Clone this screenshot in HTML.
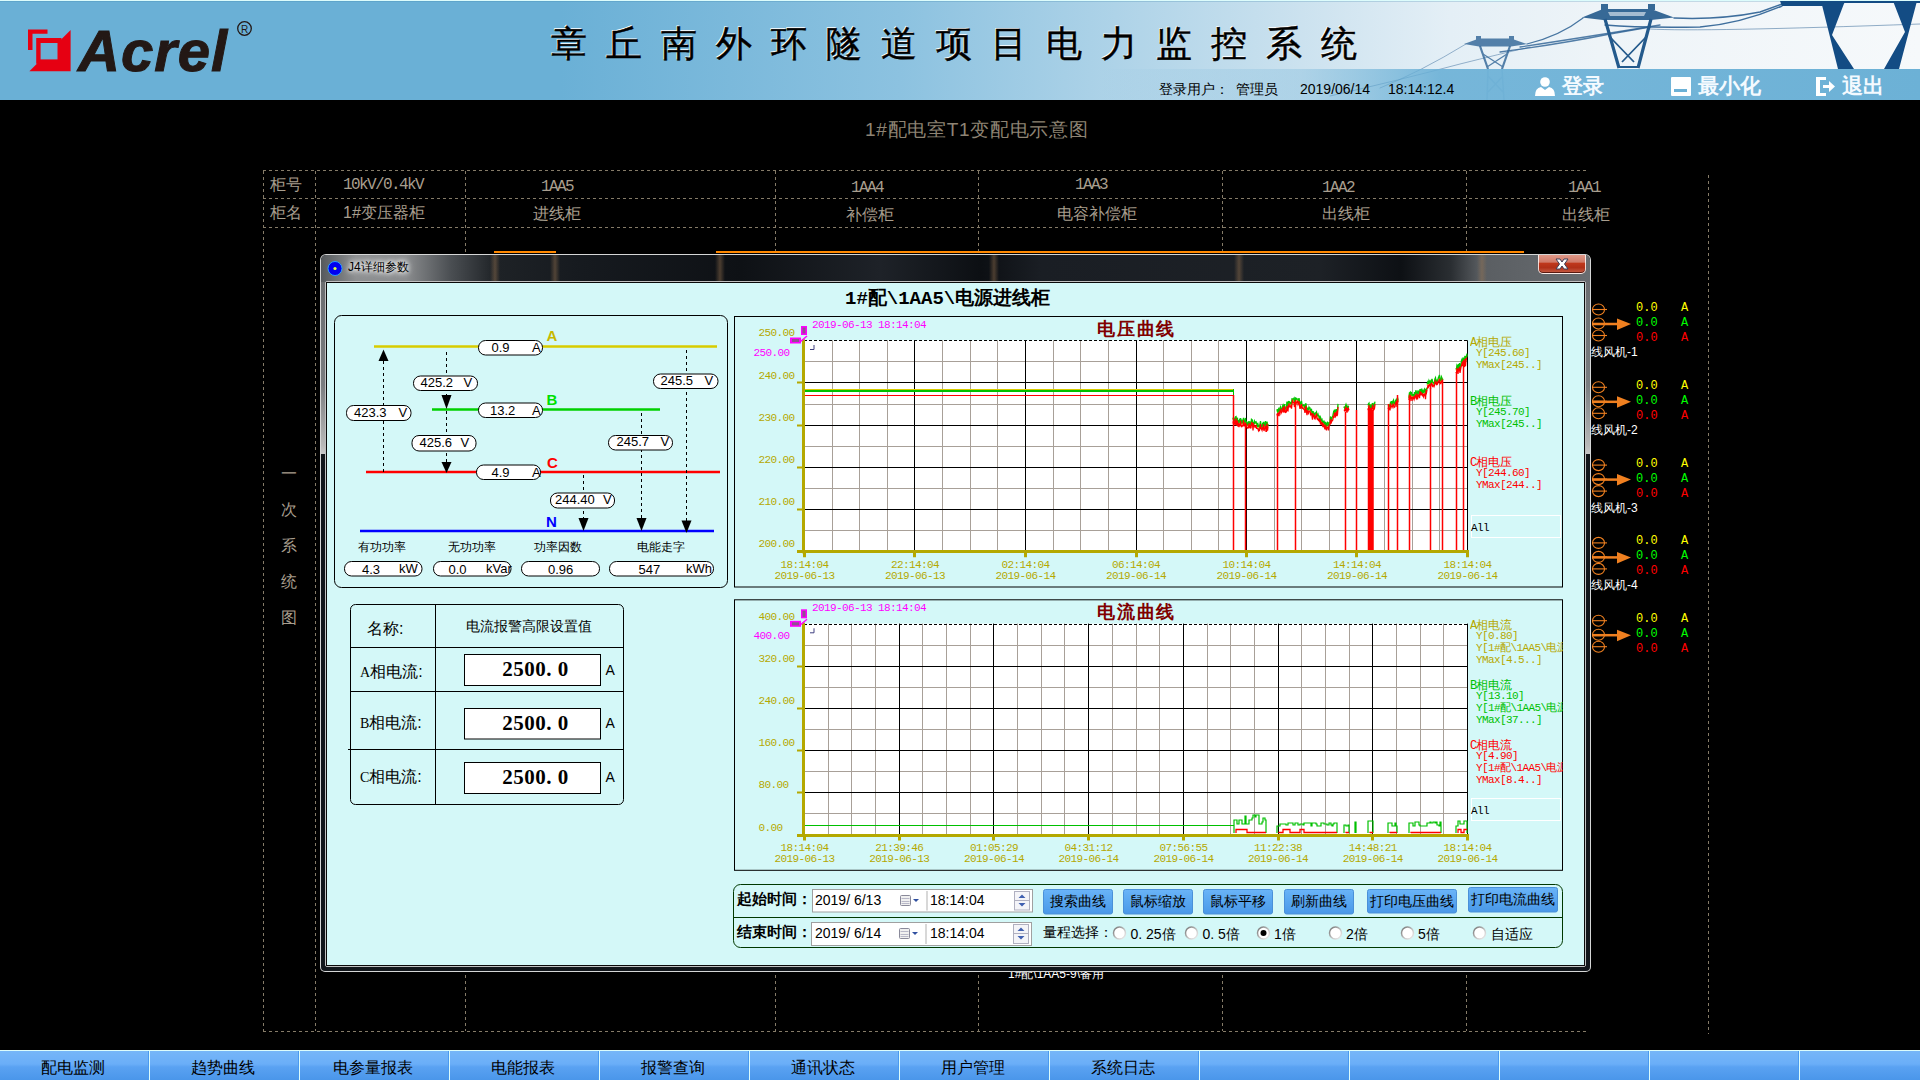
<!DOCTYPE html><html><head><meta charset="utf-8"><style>
*{margin:0;padding:0;box-sizing:border-box}
html,body{width:1920px;height:1080px;overflow:hidden;background:#000;font-family:"Liberation Sans",sans-serif}
.a{position:absolute;white-space:nowrap;line-height:1}
.m{font-family:"Liberation Mono",monospace}
.sf{font-family:"Liberation Serif",serif}
</style></head><body>

<div class="a" style="left:0;top:0;width:1920px;height:100px;background:linear-gradient(90deg,#6ab0d6 0px,#6ab0d6 560px,#8cc2e0 900px,#c8e0ee 1280px,#e4eff6 1450px,#eef4f8 1600px,#f6f9fb 1920px)"></div>
<div class="a" style="left:0;top:0;width:1920px;height:1px;background:#dcfcfc"></div>
<div class="a" style="left:0;top:1px;width:1920px;height:1px;background:rgba(60,130,170,0.25)"></div>

<svg class="a" style="left:0;top:0" width="260" height="80" viewBox="0 0 260 80">
<path fill="#e60012" d="M28 29.4 H47.5 V33.8 H32.5 V50 H28 Z"/>
<path fill="#e60012" d="M70.6 30 V71.2 H29.4 Z"/>
<path fill="#e60012" d="M36.2 38 H61.5 V63.8 H36.2 Z"/><rect x="40.6" y="43" width="16.9" height="16.4" fill="#6ab0d6"/>
</svg>
<div class="a" style="left:78px;top:22px;font-size:58px;font-weight:bold;font-style:italic;color:#231815;letter-spacing:1px;-webkit-text-stroke:1px #231815">Acrel</div>
<svg class="a" style="left:236px;top:20px" width="17" height="17" viewBox="0 0 17 17"><circle cx="8.5" cy="8.5" r="6.8" fill="none" stroke="#231815" stroke-width="1.3"/><text x="8.5" y="12.5" font-size="10" text-anchor="middle" fill="#231815" font-family="Liberation Sans">R</text></svg>

<div class="a" style="left:551px;top:26px;font-size:36px;letter-spacing:19px;color:#000;-webkit-text-stroke:0.5px #000;text-shadow:-1px -1px 0 #fff">章丘南外环隧道项目电力监控系统</div>
<svg class="a" style="left:1300px;top:0" width="620" height="100" viewBox="1300 0 620 100">
<g fill="none" stroke="#2a5f92" stroke-linecap="round">
<path d="M1380 88 Q1420 72 1466 44" stroke-width="1" opacity=".45"/>
<path d="M1330 96 Q1400 80 1460 64 Q1500 54 1530 47" stroke-width="1" opacity=".45"/>
<path d="M1527 44 Q1560 36 1583 18" stroke-width="1.2" opacity=".85"/>
<path d="M1500 52 Q1560 44 1610 34 L1650 27" stroke-width="1.3" opacity=".8"/>
<path d="M1520 47 Q1580 38 1660 25" stroke-width="1.3" opacity=".8"/>
<path d="M1605 25 Q1640 28 1700 27 Q1740 24 1782 6" stroke-width="1.4" opacity=".9"/>
<path d="M1674 18 Q1720 20 1760 12 L1782 4" stroke-width="1.5" opacity=".9"/>
<path d="M1650 29 Q1700 32 1920 24" stroke-width="1" opacity=".5"/>
</g>
<g fill="#2f6496" opacity=".8">
<path d="M1464 44 L1479 38.5 H1511 L1527 44 L1511 46.5 H1479 Z"/>
<path d="M1476 36 h5 v4 h-5 Z M1509 36 h5 v4 h-5 Z"/>
</g>
<g stroke="#2f6496" fill="none" opacity=".8">
<path d="M1480 46 L1488 69 M1510 46 L1502 69" stroke-width="2.2"/>
<path d="M1483 54 L1503 67 M1507 54 L1487 67" stroke-width="1.3"/>
</g>
<g stroke="#6a98c0" fill="none" opacity=".55">
<path d="M1488 69 L1487 100 M1502 69 L1504 100 M1488 76 L1503 92 M1503 76 L1488 92" stroke-width="1.5"/>
</g>
<g fill="#245a8c" opacity=".9">
<path d="M1582 17.5 L1603 9 H1651 L1674 17.5 L1651 20 H1603 Z"/>
<path d="M1601 4 h7 v6 h-7 Z M1648 4 h7 v6 h-7 Z"/>
</g>
<path d="M1608 12 H1646 L1644 16 H1610 Z" fill="#eef4f9" opacity=".6"/>
<g stroke="#245a8c" fill="none">
<path d="M1605 19 L1619 68 M1651 19 L1638 68" stroke-width="3.2"/>
<path d="M1609 36 L1634 62 M1647 36 L1622 62 M1618 67 H1639" stroke-width="1.8"/>
</g>
<g fill="#134c84">
<path d="M1780 1 H1920 V3 L1845 3 L1822 6 H1782 Z"/>
<path d="M1821 1 H1845 L1832 35 L1854 69 H1838 Z"/>
<path d="M1893 1 H1917 L1899 69 H1884 L1905 32 Z"/>
</g>
</svg>

<div class="a" style="left:1100px;top:69px;width:820px;height:31px;background:linear-gradient(90deg,rgba(106,176,214,0) 0px,rgba(106,176,214,0.3) 200px,rgba(106,176,214,0.9) 340px,#6cb1d6 820px)"></div>
<div class="a" style="left:1159px;top:82px;font-size:14px;color:#000">登录用户：</div>
<div class="a" style="left:1236px;top:82px;font-size:14px;color:#000">管理员</div>
<div class="a" style="left:1300px;top:82px;font-size:14px;color:#000">2019/06/14</div>
<div class="a" style="left:1388px;top:82px;font-size:14px;color:#000">18:14:12.4</div>
<svg class="a" style="left:1530px;top:74px" width="390" height="26" viewBox="1530 74 390 26">
<g fill="#fff">
<circle cx="1545" cy="82" r="4.8"/>
<path d="M1535 96 Q1535 88 1541 87 L1545 90 L1549 87 Q1555 88 1555 96 Z"/>
<rect x="1671" y="77" width="20" height="19" rx="1"/>
<path d="M1816 77 H1826 V80 H1820 V93 H1826 V96 H1816 Z"/>
<path d="M1823 85 H1829 V81 L1835 86.5 L1829 92 V88 H1823 Z"/>
</g>
<rect x="1674" y="89" width="13" height="3" fill="#6cb1d6"/>
</svg>
<div class="a" style="left:1562px;top:75px;font-size:21px;font-weight:bold;color:#f4faff">登录</div>
<div class="a" style="left:1698px;top:75px;font-size:21px;font-weight:bold;color:#f4faff">最小化</div>
<div class="a" style="left:1842px;top:75px;font-size:21px;font-weight:bold;color:#f4faff">退出</div>

<div class="a" style="left:865px;top:119.5px;font-size:19px;letter-spacing:0.7px;color:#8e8474">1#配电室T1变配电示意图</div>
<svg class="a" style="left:0;top:0" width="1920" height="1080"><g stroke="#857b68" stroke-width="1" stroke-dasharray="3 3" fill="none"><path d="M263 170.5 H1588"/><path d="M263 198.5 H1588"/><path d="M263 227.5 H1588"/><path d="M263 1031.5 H1588"/><path d="M263.5 171 V1031"/><path d="M315.5 171 V1031"/><path d="M465.5 171 V1031"/><path d="M775.5 171 V1031"/><path d="M978.5 171 V1031"/><path d="M1222.5 171 V1031"/><path d="M1466.5 171 V1031"/><path d="M1708.5 175 V1034"/></g><rect x="494" y="251" width="62" height="2" fill="#ff8800"/><rect x="716" y="251" width="808" height="2" fill="#ff8800"/></svg>
<div class="a" style="left:270px;top:177px;font-size:16px;color:#a89e8e">柜号</div>
<div class="a" style="left:270px;top:205px;font-size:16px;color:#a89e8e">柜名</div>
<div class="a m" style="left:343px;top:177px;font-size:16px;letter-spacing:-1.6px;color:#a89e8e">10kV/0.4kV</div>
<div class="a m" style="left:541px;top:179px;font-size:16px;letter-spacing:-1.6px;color:#a89e8e">1AA5</div>
<div class="a m" style="left:851px;top:180px;font-size:16px;letter-spacing:-1.6px;color:#a89e8e">1AA4</div>
<div class="a m" style="left:1075px;top:177px;font-size:16px;letter-spacing:-1.6px;color:#a89e8e">1AA3</div>
<div class="a m" style="left:1322px;top:180px;font-size:16px;letter-spacing:-1.6px;color:#a89e8e">1AA2</div>
<div class="a m" style="left:1568px;top:180px;font-size:16px;letter-spacing:-1.6px;color:#a89e8e">1AA1</div>
<div class="a" style="left:343px;top:205px;font-size:16px;color:#a89e8e">1#变压器柜</div>
<div class="a" style="left:533px;top:206px;font-size:16px;color:#a89e8e">进线柜</div>
<div class="a" style="left:846px;top:207px;font-size:16px;color:#a89e8e">补偿柜</div>
<div class="a" style="left:1057px;top:206px;font-size:16px;color:#a89e8e">电容补偿柜</div>
<div class="a" style="left:1322px;top:206px;font-size:16px;color:#a89e8e">出线柜</div>
<div class="a" style="left:1562px;top:207px;font-size:16px;color:#a89e8e">出线柜</div>
<div class="a" style="left:281px;top:466px;font-size:16px;color:#a89e8e">一</div>
<div class="a" style="left:281px;top:502px;font-size:16px;color:#a89e8e">次</div>
<div class="a" style="left:281px;top:538px;font-size:16px;color:#a89e8e">系</div>
<div class="a" style="left:281px;top:574px;font-size:16px;color:#a89e8e">统</div>
<div class="a" style="left:281px;top:610px;font-size:16px;color:#a89e8e">图</div>
<div class="a" style="left:1008px;top:968px;font-size:12px;color:#fff">1#配\1AA5-9\备用</div>
<svg class="a" style="left:1585px;top:290px" width="60" height="380" viewBox="1585 290 60 380"><g stroke="#f08020" fill="none" stroke-width="1.1"><ellipse cx="1598.5" cy="309.5" rx="6" ry="5.5"/><path d="M1592 309.5 H1607"/></g><g stroke="#f08020" fill="none" stroke-width="1.1"><ellipse cx="1598.5" cy="323.5" rx="6" ry="5.5"/><path d="M1592 323.5 H1607"/></g><g stroke="#f08020" fill="none" stroke-width="1.1"><ellipse cx="1598.5" cy="335.5" rx="6" ry="5.5"/><path d="M1592 335.5 H1607"/></g><path d="M1592 324.0 H1620" stroke="#f08020" stroke-width="2.5"/><path d="M1617 318.5 L1631 324.0 L1617 330.0 Z" fill="#f08020"/><g stroke="#f08020" fill="none" stroke-width="1.1"><ellipse cx="1598.5" cy="387.3" rx="6" ry="5.5"/><path d="M1592 387.3 H1607"/></g><g stroke="#f08020" fill="none" stroke-width="1.1"><ellipse cx="1598.5" cy="401.3" rx="6" ry="5.5"/><path d="M1592 401.3 H1607"/></g><g stroke="#f08020" fill="none" stroke-width="1.1"><ellipse cx="1598.5" cy="413.3" rx="6" ry="5.5"/><path d="M1592 413.3 H1607"/></g><path d="M1592 401.8 H1620" stroke="#f08020" stroke-width="2.5"/><path d="M1617 396.3 L1631 401.8 L1617 407.8 Z" fill="#f08020"/><g stroke="#f08020" fill="none" stroke-width="1.1"><ellipse cx="1598.5" cy="465.1" rx="6" ry="5.5"/><path d="M1592 465.1 H1607"/></g><g stroke="#f08020" fill="none" stroke-width="1.1"><ellipse cx="1598.5" cy="479.1" rx="6" ry="5.5"/><path d="M1592 479.1 H1607"/></g><g stroke="#f08020" fill="none" stroke-width="1.1"><ellipse cx="1598.5" cy="491.1" rx="6" ry="5.5"/><path d="M1592 491.1 H1607"/></g><path d="M1592 479.6 H1620" stroke="#f08020" stroke-width="2.5"/><path d="M1617 474.1 L1631 479.6 L1617 485.6 Z" fill="#f08020"/><g stroke="#f08020" fill="none" stroke-width="1.1"><ellipse cx="1598.5" cy="542.9" rx="6" ry="5.5"/><path d="M1592 542.9 H1607"/></g><g stroke="#f08020" fill="none" stroke-width="1.1"><ellipse cx="1598.5" cy="556.9" rx="6" ry="5.5"/><path d="M1592 556.9 H1607"/></g><g stroke="#f08020" fill="none" stroke-width="1.1"><ellipse cx="1598.5" cy="568.9" rx="6" ry="5.5"/><path d="M1592 568.9 H1607"/></g><path d="M1592 557.4 H1620" stroke="#f08020" stroke-width="2.5"/><path d="M1617 551.9 L1631 557.4 L1617 563.4 Z" fill="#f08020"/><g stroke="#f08020" fill="none" stroke-width="1.1"><ellipse cx="1598.5" cy="620.7" rx="6" ry="5.5"/><path d="M1592 620.7 H1607"/></g><g stroke="#f08020" fill="none" stroke-width="1.1"><ellipse cx="1598.5" cy="634.7" rx="6" ry="5.5"/><path d="M1592 634.7 H1607"/></g><g stroke="#f08020" fill="none" stroke-width="1.1"><ellipse cx="1598.5" cy="646.7" rx="6" ry="5.5"/><path d="M1592 646.7 H1607"/></g><path d="M1592 635.2 H1620" stroke="#f08020" stroke-width="2.5"/><path d="M1617 629.7 L1631 635.2 L1617 641.2 Z" fill="#f08020"/></svg>
<div class="a m" style="left:1636px;top:302px;font-size:12px;color:#ffff00">0.0</div>
<div class="a m" style="left:1681px;top:302px;font-size:12px;color:#ffff00">A</div>
<div class="a m" style="left:1636px;top:317px;font-size:12px;color:#00ff00">0.0</div>
<div class="a m" style="left:1681px;top:317px;font-size:12px;color:#00ff00">A</div>
<div class="a m" style="left:1636px;top:332px;font-size:12px;color:#ff0000">0.0</div>
<div class="a m" style="left:1681px;top:332px;font-size:12px;color:#ff0000">A</div>
<div class="a" style="left:1591px;top:346px;font-size:12px;color:#fff">线风机-1</div>
<div class="a m" style="left:1636px;top:380px;font-size:12px;color:#ffff00">0.0</div>
<div class="a m" style="left:1681px;top:380px;font-size:12px;color:#ffff00">A</div>
<div class="a m" style="left:1636px;top:395px;font-size:12px;color:#00ff00">0.0</div>
<div class="a m" style="left:1681px;top:395px;font-size:12px;color:#00ff00">A</div>
<div class="a m" style="left:1636px;top:410px;font-size:12px;color:#ff0000">0.0</div>
<div class="a m" style="left:1681px;top:410px;font-size:12px;color:#ff0000">A</div>
<div class="a" style="left:1591px;top:424px;font-size:12px;color:#fff">线风机-2</div>
<div class="a m" style="left:1636px;top:458px;font-size:12px;color:#ffff00">0.0</div>
<div class="a m" style="left:1681px;top:458px;font-size:12px;color:#ffff00">A</div>
<div class="a m" style="left:1636px;top:473px;font-size:12px;color:#00ff00">0.0</div>
<div class="a m" style="left:1681px;top:473px;font-size:12px;color:#00ff00">A</div>
<div class="a m" style="left:1636px;top:488px;font-size:12px;color:#ff0000">0.0</div>
<div class="a m" style="left:1681px;top:488px;font-size:12px;color:#ff0000">A</div>
<div class="a" style="left:1591px;top:502px;font-size:12px;color:#fff">线风机-3</div>
<div class="a m" style="left:1636px;top:535px;font-size:12px;color:#ffff00">0.0</div>
<div class="a m" style="left:1681px;top:535px;font-size:12px;color:#ffff00">A</div>
<div class="a m" style="left:1636px;top:550px;font-size:12px;color:#00ff00">0.0</div>
<div class="a m" style="left:1681px;top:550px;font-size:12px;color:#00ff00">A</div>
<div class="a m" style="left:1636px;top:565px;font-size:12px;color:#ff0000">0.0</div>
<div class="a m" style="left:1681px;top:565px;font-size:12px;color:#ff0000">A</div>
<div class="a" style="left:1591px;top:579px;font-size:12px;color:#fff">线风机-4</div>
<div class="a m" style="left:1636px;top:613px;font-size:12px;color:#ffff00">0.0</div>
<div class="a m" style="left:1681px;top:613px;font-size:12px;color:#ffff00">A</div>
<div class="a m" style="left:1636px;top:628px;font-size:12px;color:#00ff00">0.0</div>
<div class="a m" style="left:1681px;top:628px;font-size:12px;color:#00ff00">A</div>
<div class="a m" style="left:1636px;top:643px;font-size:12px;color:#ff0000">0.0</div>
<div class="a m" style="left:1681px;top:643px;font-size:12px;color:#ff0000">A</div>
<div class="a" style="left:0;top:1050px;width:1920px;height:30px;background:#dcfcfc"></div>
<div class="a" style="left:0px;top:1051px;width:149px;height:29px;background:linear-gradient(#76b6f8,#6aaef8 45%,#5aa2f2 55%,#4a96ea);border-right:1px solid #4b9aee"></div>
<div class="a" style="left:-2px;top:1060px;width:149px;text-align:center;font-size:16px;color:#000">配电监测</div>
<div class="a" style="left:150px;top:1051px;width:149px;height:29px;background:linear-gradient(#76b6f8,#6aaef8 45%,#5aa2f2 55%,#4a96ea);border-right:1px solid #4b9aee"></div>
<div class="a" style="left:148px;top:1060px;width:149px;text-align:center;font-size:16px;color:#000">趋势曲线</div>
<div class="a" style="left:300px;top:1051px;width:149px;height:29px;background:linear-gradient(#76b6f8,#6aaef8 45%,#5aa2f2 55%,#4a96ea);border-right:1px solid #4b9aee"></div>
<div class="a" style="left:298px;top:1060px;width:149px;text-align:center;font-size:16px;color:#000">电参量报表</div>
<div class="a" style="left:450px;top:1051px;width:149px;height:29px;background:linear-gradient(#76b6f8,#6aaef8 45%,#5aa2f2 55%,#4a96ea);border-right:1px solid #4b9aee"></div>
<div class="a" style="left:448px;top:1060px;width:149px;text-align:center;font-size:16px;color:#000">电能报表</div>
<div class="a" style="left:600px;top:1051px;width:149px;height:29px;background:linear-gradient(#76b6f8,#6aaef8 45%,#5aa2f2 55%,#4a96ea);border-right:1px solid #4b9aee"></div>
<div class="a" style="left:598px;top:1060px;width:149px;text-align:center;font-size:16px;color:#000">报警查询</div>
<div class="a" style="left:750px;top:1051px;width:149px;height:29px;background:linear-gradient(#76b6f8,#6aaef8 45%,#5aa2f2 55%,#4a96ea);border-right:1px solid #4b9aee"></div>
<div class="a" style="left:748px;top:1060px;width:149px;text-align:center;font-size:16px;color:#000">通讯状态</div>
<div class="a" style="left:900px;top:1051px;width:149px;height:29px;background:linear-gradient(#76b6f8,#6aaef8 45%,#5aa2f2 55%,#4a96ea);border-right:1px solid #4b9aee"></div>
<div class="a" style="left:898px;top:1060px;width:149px;text-align:center;font-size:16px;color:#000">用户管理</div>
<div class="a" style="left:1050px;top:1051px;width:149px;height:29px;background:linear-gradient(#76b6f8,#6aaef8 45%,#5aa2f2 55%,#4a96ea);border-right:1px solid #4b9aee"></div>
<div class="a" style="left:1048px;top:1060px;width:149px;text-align:center;font-size:16px;color:#000">系统日志</div>
<div class="a" style="left:1200px;top:1051px;width:149px;height:29px;background:linear-gradient(#76b6f8,#6aaef8 45%,#5aa2f2 55%,#4a96ea);border-right:1px solid #4b9aee"></div>
<div class="a" style="left:1350px;top:1051px;width:149px;height:29px;background:linear-gradient(#76b6f8,#6aaef8 45%,#5aa2f2 55%,#4a96ea);border-right:1px solid #4b9aee"></div>
<div class="a" style="left:1500px;top:1051px;width:149px;height:29px;background:linear-gradient(#76b6f8,#6aaef8 45%,#5aa2f2 55%,#4a96ea);border-right:1px solid #4b9aee"></div>
<div class="a" style="left:1650px;top:1051px;width:149px;height:29px;background:linear-gradient(#76b6f8,#6aaef8 45%,#5aa2f2 55%,#4a96ea);border-right:1px solid #4b9aee"></div>
<div class="a" style="left:1800px;top:1051px;width:149px;height:29px;background:linear-gradient(#76b6f8,#6aaef8 45%,#5aa2f2 55%,#4a96ea);border-right:1px solid #4b9aee"></div>
<div class="a" style="left:320px;top:254px;width:1271px;height:718px;border:1px solid rgba(235,235,235,.9);border-radius:6px 6px 5px 5px;background:#12161b"></div>
<div class="a" style="left:321px;top:255px;width:1269px;height:27px;border-radius:5px 5px 0 0;background:linear-gradient(90deg,rgba(150,115,80,0) 169px,rgba(150,115,80,.45) 174px,rgba(150,115,80,0) 179px),linear-gradient(90deg,rgba(150,115,80,0) 229px,rgba(150,115,80,.45) 234px,rgba(150,115,80,0) 239px),linear-gradient(90deg,rgba(150,115,80,0) 394px,rgba(150,115,80,.45) 399px,rgba(150,115,80,0) 404px),linear-gradient(90deg,rgba(150,115,80,0) 668px,rgba(150,115,80,.45) 673px,rgba(150,115,80,0) 678px),linear-gradient(90deg,rgba(150,115,80,0) 913px,rgba(150,115,80,.45) 918px,rgba(150,115,80,0) 923px),linear-gradient(90deg,rgba(150,115,80,0) 1156px,rgba(150,115,80,.45) 1161px,rgba(150,115,80,0) 1166px),linear-gradient(90deg,#55595c 0px,#8e9092 35px,#8a8c8e 85px,#4a4e52 130px,#1e2226 175px,#161a1f 260px,#0e1115 420px,#1e2228 560px,#0c0f13 660px,#1a1e24 720px,#1d2126 1000px,#0d1014 1080px,#2a2e32 1130px,#5a5e62 1160px,#686c70 1269px)"></div>
<div class="a" style="left:321px;top:282px;width:5px;height:172px;background:linear-gradient(#6a6d70,#7a7d80 60%,#b8b8b8 95%,#c8c8c8)"></div>
<div class="a" style="left:1585px;top:282px;width:5px;height:172px;background:linear-gradient(#6a6d70,#7a7d80 60%,#b8b8b8 95%,#c8c8c8)"></div>
<div class="a" style="left:325px;top:281px;width:1261px;height:686px;border:1px solid #c0c0c0;border-radius:2px"></div>
<div class="a" style="left:326px;top:282px;width:1259px;height:684px;border:1px solid #0a0a0a;background:#d4f8f8"></div>

<div class="a" style="left:1538px;top:255px;width:48px;height:19px;border:1px solid rgba(255,255,255,.8);border-top:none;border-radius:0 0 5px 5px;background:linear-gradient(#e09888 0%,#d07a68 40%,#c0381c 45%,#b03018 70%,#c86048 100%);box-shadow:0 -1px 0 #5a1a10 inset"></div>
<svg class="a" style="left:1551px;top:257px" width="22" height="14" viewBox="0 0 22 14"><path d="M5 2 L9 2 L11 5 L13 2 L17 2 L13.5 7 L17 12 L13 12 L11 9 L9 12 L5 12 L8.5 7 Z" fill="#fff" stroke="#3a3e58" stroke-width="1"/></svg>

<svg class="a" style="left:326px;top:260px" width="18" height="18" viewBox="0 0 18 18"><circle cx="9" cy="8.5" r="7" fill="#0000f0" stroke="#2aa0ff" stroke-width="1"/><circle cx="9" cy="8.5" r="1.6" fill="#e0ff40"/></svg>
<div class="a" style="left:348px;top:261px;font-size:12px;color:#000;text-shadow:0 0 4px #fff,0 0 6px #fff,0 0 8px rgba(255,255,255,.8)">J4详细参数</div>

<div class="a m" style="left:845px;top:290px;font-size:19px;font-weight:bold;color:#000;letter-spacing:0px">1#配\1AA5\电源进线柜</div>
<svg class="a" style="left:0;top:0" width="1920" height="1080"><rect x="334.5" y="315.5" width="393" height="272" rx="7" fill="none" stroke="#000"/><path d="M374 346.5 H717" stroke="#d8cc00" stroke-width="2.5"/><path d="M432 409.5 H660" stroke="#00d000" stroke-width="2.5"/><path d="M366 472 H720" stroke="#ff0000" stroke-width="2.5"/><path d="M360 531 H714" stroke="#0000ff" stroke-width="2.5"/><path d="M383.5 361.0 V472.0" stroke="#000" stroke-width="1" stroke-dasharray="3 3"/><path d="M383.5 349.5 L378.5 361.0 L388.5 361.0 Z" fill="#000"/><path d="M446.5 352.0 V396.0" stroke="#000" stroke-width="1" stroke-dasharray="3 3"/><path d="M446.5 409.0 L441.5 395.0 L451.5 395.0 Z" fill="#000"/><path d="M446.5 411.0 V463.0" stroke="#000" stroke-width="1" stroke-dasharray="3 3"/><path d="M446.5 473.0 L441.5 462.0 L451.5 462.0 Z" fill="#000"/><path d="M686.5 350.0 V521.0" stroke="#000" stroke-width="1" stroke-dasharray="3 3"/><path d="M686.5 533.0 L681.5 520.5 L691.5 520.5 Z" fill="#000"/><path d="M641.5 413.0 V518.0" stroke="#000" stroke-width="1" stroke-dasharray="3 3"/><path d="M641.5 531.0 L636.5 518.0 L646.5 518.0 Z" fill="#000"/><path d="M583.5 475.0 V518.0" stroke="#000" stroke-width="1" stroke-dasharray="3 3"/><path d="M583.5 531.0 L578.5 518.0 L588.5 518.0 Z" fill="#000"/><rect x="478.5" y="340.5" width="64.0" height="14.5" rx="7" fill="#fff" stroke="#000"/><rect x="478.5" y="403.0" width="64.0" height="14.5" rx="7" fill="#fff" stroke="#000"/><rect x="476.5" y="465.0" width="64.0" height="14.5" rx="7" fill="#fff" stroke="#000"/><rect x="413.5" y="376.0" width="64.0" height="14.5" rx="7" fill="#fff" stroke="#000"/><rect x="346.5" y="405.5" width="64.5" height="15.0" rx="7" fill="#fff" stroke="#000"/><rect x="412.0" y="435.5" width="64.0" height="15.5" rx="7" fill="#fff" stroke="#000"/><rect x="653.5" y="374.0" width="64.5" height="14.5" rx="7" fill="#fff" stroke="#000"/><rect x="608.5" y="435.5" width="64.0" height="14.5" rx="7" fill="#fff" stroke="#000"/><rect x="550.5" y="493.0" width="64.0" height="15.0" rx="7" fill="#fff" stroke="#000"/><rect x="344.5" y="561.5" width="77.5" height="14.5" rx="7" fill="#fff" stroke="#000"/><rect x="433.5" y="561.5" width="77.5" height="14.5" rx="7" fill="#fff" stroke="#000"/><rect x="521.5" y="561.5" width="78.0" height="14.5" rx="7" fill="#fff" stroke="#000"/><rect x="609.5" y="561.5" width="104.0" height="14.5" rx="7" fill="#fff" stroke="#000"/></svg>
<div class="a" style="left:491.5px;top:340.5px;font-size:13px;color:#000;">0.9</div>
<div class="a" style="left:532.0px;top:340.5px;font-size:13px;color:#000;">A</div>
<div class="a" style="left:490.0px;top:403.5px;font-size:13px;color:#000;">13.2</div>
<div class="a" style="left:532.0px;top:403.5px;font-size:13px;color:#000;">A</div>
<div class="a" style="left:491.5px;top:465.5px;font-size:13px;color:#000;">4.9</div>
<div class="a" style="left:532.0px;top:465.5px;font-size:13px;color:#000;">A</div>
<div class="a" style="left:420.5px;top:376.0px;font-size:13px;color:#000;">425.2</div>
<div class="a" style="left:463.5px;top:376.0px;font-size:13px;color:#000;">V</div>
<div class="a" style="left:354.0px;top:405.5px;font-size:13px;color:#000;">423.3</div>
<div class="a" style="left:398.5px;top:405.5px;font-size:13px;color:#000;">V</div>
<div class="a" style="left:419.5px;top:435.5px;font-size:13px;color:#000;">425.6</div>
<div class="a" style="left:460.5px;top:435.5px;font-size:13px;color:#000;">V</div>
<div class="a" style="left:660.5px;top:373.5px;font-size:13px;color:#000;">245.5</div>
<div class="a" style="left:704.5px;top:373.5px;font-size:13px;color:#000;">V</div>
<div class="a" style="left:616.5px;top:435.0px;font-size:13px;color:#000;">245.7</div>
<div class="a" style="left:660.5px;top:435.0px;font-size:13px;color:#000;">V</div>
<div class="a" style="left:555.0px;top:492.5px;font-size:13px;color:#000;">244.40</div>
<div class="a" style="left:603.0px;top:492.5px;font-size:13px;color:#000;">V</div>
<div class="a" style="left:362.0px;top:563.0px;font-size:13px;color:#000;">4.3</div>
<div class="a" style="left:399.0px;top:562.0px;font-size:13px;color:#000;">kW</div>
<div class="a" style="left:448.5px;top:563.0px;font-size:13px;color:#000;">0.0</div>
<div class="a" style="left:486.0px;top:562.0px;font-size:13px;color:#000;">kVar</div>
<div class="a" style="left:548.0px;top:563.0px;font-size:13px;color:#000;">0.96</div>
<div class="a" style="left:638.5px;top:563.0px;font-size:13px;color:#000;">547</div>
<div class="a" style="left:686.0px;top:562.0px;font-size:13px;color:#000;">kWh</div>
<div class="a" style="left:546.5px;top:328.0px;font-size:15px;color:#c8b800;font-weight:bold">A</div>
<div class="a" style="left:546.5px;top:391.5px;font-size:15px;color:#00e000;font-weight:bold">B</div>
<div class="a" style="left:547.0px;top:454.5px;font-size:15px;color:#ff0000;font-weight:bold">C</div>
<div class="a" style="left:546.0px;top:513.5px;font-size:15px;color:#0000ff;font-weight:bold">N</div>
<div class="a" style="left:358.0px;top:541.0px;font-size:12px;color:#000;">有功功率</div>
<div class="a" style="left:448.0px;top:541.0px;font-size:12px;color:#000;">无功功率</div>
<div class="a" style="left:534.0px;top:541.0px;font-size:12px;color:#000;">功率因数</div>
<div class="a" style="left:637.0px;top:541.0px;font-size:12px;color:#000;">电能走字</div>
<svg class="a" style="left:0;top:0" width="1920" height="1080"><rect x="350.5" y="604.5" width="273" height="200" rx="5" fill="none" stroke="#000"/><path d="M435.5 605 V804 M351 647.5 H623 M351 691.5 H623 M348 749.5 H623" stroke="#000" fill="none"/><rect x="464.5" y="654.5" width="136" height="31.0" fill="#fff" stroke="#000"/><rect x="464.5" y="708.5" width="136" height="30.5" fill="#fff" stroke="#000"/><rect x="464.5" y="762.5" width="136" height="31.0" fill="#fff" stroke="#000"/></svg>
<div class="a" style="left:367.0px;top:621.0px;font-size:16px;color:#000;">名称:</div>
<div class="a" style="left:466.0px;top:619.0px;font-size:14px;color:#000;">电流报警高限设置值</div>
<div class="a" style="left:360px;top:664.0px;font-size:16px;color:#000"><span class="sf" style="font-size:14px">A</span>相电流:</div>
<div class="a" style="left:360px;top:714.5px;font-size:16px;color:#000"><span class="sf" style="font-size:14px">B</span>相电流:</div>
<div class="a" style="left:360px;top:768.5px;font-size:16px;color:#000"><span class="sf" style="font-size:14px">C</span>相电流:</div>
<div class="a sf" style="left:467px;top:659.0px;width:137px;text-align:center;font-size:21px;font-weight:bold;letter-spacing:0.5px;color:#000">2500. 0</div>
<div class="a sf" style="left:467px;top:712.5px;width:137px;text-align:center;font-size:21px;font-weight:bold;letter-spacing:0.5px;color:#000">2500. 0</div>
<div class="a sf" style="left:467px;top:766.5px;width:137px;text-align:center;font-size:21px;font-weight:bold;letter-spacing:0.5px;color:#000">2500. 0</div>
<div class="a" style="left:605.5px;top:662.5px;font-size:14px;color:#000;">A</div>
<div class="a" style="left:605.5px;top:716.0px;font-size:14px;color:#000;">A</div>
<div class="a" style="left:605.5px;top:770.0px;font-size:14px;color:#000;">A</div>
<svg class="a" style="left:0;top:0" width="1920" height="1080"><rect x="734.5" y="316.5" width="828.0" height="270.5" fill="none" stroke="#000"/><rect x="804" y="340.3" width="663" height="211.0" fill="#fff"/><path d="M832.5 340.3 V551.3 M859.5 340.3 V551.3 M887.5 340.3 V551.3 M942.5 340.3 V551.3 M970.5 340.3 V551.3 M997.5 340.3 V551.3 M1053.5 340.3 V551.3 M1080.5 340.3 V551.3 M1108.5 340.3 V551.3 M1163.5 340.3 V551.3 M1191.5 340.3 V551.3 M1218.5 340.3 V551.3 M1274.5 340.3 V551.3 M1301.5 340.3 V551.3 M1329.5 340.3 V551.3 M1384.5 340.3 V551.3 M1412.5 340.3 V551.3 M1439.5 340.3 V551.3 M804 361.5 H1467 M804 404.5 H1467 M804 446.5 H1467 M804 488.5 H1467 M804 530.5 H1467" stroke="#a8a098" fill="none"/><path d="M914.5 340.3 V551.3 M1025.5 340.3 V551.3 M1136.5 340.3 V551.3 M1246.5 340.3 V551.3 M1356.5 340.3 V551.3 M804 382.5 H1467 M804 425.5 H1467 M804 467.5 H1467 M804 509.5 H1467 M1467.5 340.3 V551.3" stroke="#000" fill="none"/><path d="M804 340.5 H1468 M804.5 340.3 V551.3" stroke="#000" stroke-dasharray="3 2" fill="none"/><path d="M804 389.5 H1233.5" stroke="#d8cc00" stroke-width="1"/><path d="M804 391 H1233.5" stroke="#00c000" stroke-width="2"/><path d="M804 395.5 H1233.5" stroke="#ff0000" stroke-width="1"/><path d="M1233.5 389 V425 M1233.5 391 V425" stroke="#00c000" stroke-width="1"/><path d="M1233.0 418.0 L1233.5 420.5 L1234.0 420.3 L1234.5 422.2 L1235.0 420.8 L1235.5 418.0 L1236.0 416.6 L1236.5 423.8 L1237.0 419.0 L1237.5 420.0 L1238.0 425.6 L1238.5 421.1 L1239.0 424.7 L1239.5 420.9 L1240.0 421.6 L1240.5 419.3 L1241.0 421.6 L1241.5 423.7 L1242.0 421.8 L1242.5 423.8 L1243.0 422.4 L1243.5 418.0 L1244.0 424.6 L1244.5 422.4 L1245.0 421.7 L1245.5 419.8 L1246.0 424.7 L1246.5 422.2 L1247.0 424.1 L1247.5 425.5 L1248.0 424.3 L1248.5 425.8 L1249.0 422.3 L1249.5 425.8 L1250.0 422.6 L1250.5 425.9 L1251.0 426.2 L1251.5 419.8 L1252.0 420.3 L1252.5 422.3 L1253.0 426.7 L1253.5 423.1 L1254.0 423.4 L1254.5 422.0 L1255.0 423.9 L1255.5 422.0 L1256.0 423.0 L1256.5 424.7 L1257.0 423.6 L1257.5 427.1 L1258.0 425.3 L1258.5 427.5 L1259.0 426.4 L1259.5 428.1 L1260.0 426.0 L1260.5 421.1 L1261.0 426.1 L1261.5 428.2 L1262.0 428.4 L1262.5 424.7 L1263.0 426.2 L1263.5 423.0 L1264.0 426.9 L1264.5 425.2 L1265.0 423.2 L1265.5 421.8 L1266.0 427.9 L1266.5 428.3 L1267.0 422.2 L1267.5 428.1 L1268.0 423.9 M1277.0 409.8 L1277.5 412.7 L1278.0 411.3 L1278.5 409.8 L1279.0 412.9 L1279.5 410.6 L1280.0 408.0 L1280.5 408.0 L1281.0 412.3 L1281.5 408.6 L1282.0 409.9 L1282.5 406.8 L1283.0 405.8 L1283.5 408.4 L1284.0 410.4 L1284.5 404.8 L1285.0 409.7 L1285.5 410.0 L1286.0 408.6 L1286.5 408.3 L1287.0 402.5 L1287.5 407.0 L1288.0 407.8 L1288.5 402.4 L1289.0 403.2 L1289.5 402.5 L1290.0 404.6 L1290.5 403.9 L1291.0 402.8 L1291.5 405.3 L1292.0 399.6 L1292.5 400.6 L1293.0 401.0 L1293.5 399.5 L1294.0 399.9 L1294.5 405.8 L1295.0 403.6 L1295.5 398.4 L1296.0 400.3 L1296.5 400.1 L1297.0 399.5 M1297.0 400.0 L1297.5 400.5 L1298.0 401.2 L1298.5 401.8 L1299.0 398.7 L1299.5 401.9 L1300.0 405.7 L1300.5 402.1 L1301.0 405.9 L1301.5 402.5 L1302.0 406.7 L1302.5 406.2 L1303.0 407.3 L1303.5 405.5 L1304.0 405.9 L1304.5 408.0 L1305.0 408.9 L1305.5 404.1 L1306.0 405.6 L1306.5 409.5 L1307.0 411.2 L1307.5 409.2 L1308.0 409.3 L1308.5 410.3 L1309.0 407.6 L1309.5 408.8 L1310.0 408.8 L1310.5 411.4 L1311.0 410.7 L1311.5 411.2 L1312.0 413.7 L1312.5 416.3 L1313.0 411.2 L1313.5 414.8 L1314.0 413.9 L1314.5 416.3 L1315.0 416.4 L1315.5 414.6 L1316.0 413.0 L1316.5 413.8 L1317.0 416.2 L1317.5 416.8 L1318.0 415.7 L1318.5 416.5 L1319.0 417.3 L1319.5 420.9 L1320.0 417.2 L1320.5 422.4 L1321.0 420.2 L1321.5 421.9 L1322.0 420.8 L1322.5 423.5 L1323.0 422.9 L1323.5 422.3 L1324.0 421.8 L1324.5 424.7 L1325.0 425.9 L1325.5 422.9 L1326.0 424.9 L1326.5 427.8 L1327.0 424.7 L1327.5 422.6 L1328.0 424.4 M1328.0 424.7 L1328.5 427.4 L1329.0 422.7 L1329.5 423.2 L1330.0 423.0 L1330.5 416.7 L1331.0 422.1 L1331.5 421.2 L1332.0 417.9 L1332.5 418.3 L1333.0 416.6 L1333.5 412.7 L1334.0 415.6 L1334.5 410.8 L1335.0 413.8 L1335.5 413.5 L1336.0 411.2 L1336.5 410.3 L1337.0 413.1 L1337.5 412.0 L1338.0 405.7 M1344.0 406.9 L1344.5 408.6 L1345.0 408.7 L1345.5 405.9 L1346.0 404.6 L1346.5 406.3 L1347.0 411.1 L1347.5 405.8 L1348.0 408.1 L1348.5 407.2 L1349.0 407.3 M1368.0 406.8 L1368.5 405.7 L1369.0 404.3 L1369.5 407.7 L1370.0 404.4 L1370.5 408.0 L1371.0 405.7 L1371.5 408.6 L1372.0 404.1 L1372.5 404.8 L1373.0 405.2 L1373.5 407.5 L1374.0 407.6 L1374.5 404.5 L1375.0 403.3 M1388.0 407.7 L1388.5 407.3 L1389.0 406.6 L1389.5 404.7 L1390.0 408.4 L1390.5 403.8 L1391.0 404.5 L1391.5 403.0 L1392.0 405.8 L1392.5 404.4 L1393.0 402.4 L1393.5 400.7 L1394.0 404.4 L1394.5 402.8 L1395.0 404.0 L1395.5 402.6 L1396.0 401.4 L1396.5 399.8 L1397.0 402.6 L1397.5 397.5 L1398.0 401.6 M1409.0 398.2 L1409.5 392.6 L1410.0 398.9 L1410.5 392.7 L1411.0 395.6 L1411.5 394.0 L1412.0 397.4 L1412.5 396.4 L1413.0 395.7 L1413.5 396.2 L1414.0 397.9 L1414.5 394.0 L1415.0 395.8 L1415.5 393.6 L1416.0 391.8 L1416.5 396.0 L1417.0 395.4 L1417.5 396.7 L1418.0 391.0 L1418.5 394.5 L1419.0 392.4 L1419.5 394.0 L1420.0 390.5 L1420.5 391.5 L1421.0 392.8 L1421.5 390.0 L1422.0 392.1 L1422.5 394.6 L1423.0 391.4 L1423.5 393.2 L1424.0 392.6 L1424.5 390.5 L1425.0 391.4 L1425.5 394.9 L1426.0 389.8 L1426.5 390.7 L1427.0 388.4 M1427.0 385.2 L1427.5 383.9 L1428.0 381.9 L1428.5 384.4 L1429.0 381.0 L1429.5 383.3 L1430.0 383.2 L1430.5 386.0 L1431.0 382.7 L1431.5 381.3 L1432.0 379.7 L1432.5 382.9 L1433.0 383.3 L1433.5 384.4 L1434.0 384.2 L1434.5 383.5 L1435.0 379.8 L1435.5 378.5 L1436.0 383.5 L1436.5 383.4 L1437.0 381.4 L1437.5 382.8 L1438.0 379.4 L1438.5 378.4 L1439.0 377.3 L1439.5 375.8 L1440.0 379.6 L1440.5 381.9 L1441.0 382.2 L1441.5 377.2 L1442.0 379.5 L1442.5 380.5 L1443.0 379.7 M1456.0 368.7 L1456.5 371.2 L1457.0 365.7 L1457.5 366.1 L1458.0 370.6 L1458.5 364.3 L1459.0 369.5 L1459.5 364.9 L1460.0 368.4 L1460.5 365.8 L1461.0 366.5 L1461.5 362.5 L1462.0 361.3 L1462.5 364.1 L1463.0 359.7 L1463.5 360.4 L1464.0 363.3 L1464.5 363.5 L1465.0 356.3 L1465.5 361.5 L1466.0 358.6 L1466.5 357.8 L1467.0 355.3" stroke="#d8cc00" fill="none" stroke-width="1"/><path d="M1233.0 417.7 L1233.5 419.9 L1234.0 418.7 L1234.5 420.4 L1235.0 420.7 L1235.5 416.8 L1236.0 416.5 L1236.5 422.4 L1237.0 418.4 L1237.5 418.3 L1238.0 423.7 L1238.5 420.1 L1239.0 422.7 L1239.5 420.3 L1240.0 421.5 L1240.5 418.1 L1241.0 421.6 L1241.5 423.3 L1242.0 420.9 L1242.5 422.5 L1243.0 422.1 L1243.5 417.9 L1244.0 422.9 L1244.5 421.8 L1245.0 419.8 L1245.5 418.0 L1246.0 423.9 L1246.5 421.2 L1247.0 423.0 L1247.5 424.2 L1248.0 423.1 L1248.5 424.7 L1249.0 421.1 L1249.5 424.0 L1250.0 421.5 L1250.5 425.0 L1251.0 424.7 L1251.5 419.3 L1252.0 419.7 L1252.5 420.3 L1253.0 425.6 L1253.5 422.0 L1254.0 423.4 L1254.5 421.2 L1255.0 422.7 L1255.5 421.9 L1256.0 421.7 L1256.5 423.5 L1257.0 423.5 L1257.5 425.8 L1258.0 424.3 L1258.5 426.1 L1259.0 425.7 L1259.5 426.7 L1260.0 424.6 L1260.5 421.1 L1261.0 426.0 L1261.5 426.8 L1262.0 426.5 L1262.5 424.2 L1263.0 425.3 L1263.5 421.8 L1264.0 426.2 L1264.5 424.5 L1265.0 422.6 L1265.5 421.1 L1266.0 426.7 L1266.5 427.7 L1267.0 421.5 L1267.5 426.5 L1268.0 423.9 M1277.0 409.1 L1277.5 411.4 L1278.0 410.1 L1278.5 409.1 L1279.0 412.5 L1279.5 409.9 L1280.0 407.7 L1280.5 406.8 L1281.0 410.8 L1281.5 407.9 L1282.0 409.7 L1282.5 406.4 L1283.0 405.1 L1283.5 407.2 L1284.0 408.9 L1284.5 404.1 L1285.0 408.1 L1285.5 408.8 L1286.0 407.7 L1286.5 407.5 L1287.0 401.6 L1287.5 405.6 L1288.0 407.0 L1288.5 401.0 L1289.0 402.3 L1289.5 402.0 L1290.0 403.5 L1290.5 402.5 L1291.0 402.6 L1291.5 404.5 L1292.0 398.8 L1292.5 398.9 L1293.0 399.1 L1293.5 398.8 L1294.0 398.1 L1294.5 404.2 L1295.0 403.1 L1295.5 397.4 L1296.0 400.1 L1296.5 398.5 L1297.0 398.2 M1297.0 398.6 L1297.5 399.2 L1298.0 399.3 L1298.5 400.1 L1299.0 398.2 L1299.5 401.5 L1300.0 405.2 L1300.5 401.7 L1301.0 404.5 L1301.5 400.8 L1302.0 404.9 L1302.5 405.7 L1303.0 405.6 L1303.5 404.9 L1304.0 405.0 L1304.5 406.5 L1305.0 408.7 L1305.5 403.9 L1306.0 403.9 L1306.5 408.9 L1307.0 410.5 L1307.5 408.1 L1308.0 408.0 L1308.5 410.3 L1309.0 407.0 L1309.5 408.0 L1310.0 407.9 L1310.5 411.0 L1311.0 409.5 L1311.5 409.3 L1312.0 412.9 L1312.5 415.2 L1313.0 411.0 L1313.5 414.2 L1314.0 412.6 L1314.5 416.1 L1315.0 414.6 L1315.5 412.8 L1316.0 412.8 L1316.5 411.9 L1317.0 415.5 L1317.5 415.2 L1318.0 414.1 L1318.5 415.9 L1319.0 416.0 L1319.5 419.6 L1320.0 415.6 L1320.5 421.9 L1321.0 418.7 L1321.5 420.0 L1322.0 419.4 L1322.5 422.4 L1323.0 422.7 L1323.5 421.3 L1324.0 421.1 L1324.5 423.2 L1325.0 424.6 L1325.5 421.8 L1326.0 424.5 L1326.5 426.5 L1327.0 423.5 L1327.5 422.2 L1328.0 422.6 M1328.0 423.1 L1328.5 426.1 L1329.0 422.6 L1329.5 422.5 L1330.0 422.5 L1330.5 416.5 L1331.0 421.0 L1331.5 419.3 L1332.0 417.2 L1332.5 416.6 L1333.0 415.2 L1333.5 412.5 L1334.0 413.9 L1334.5 409.6 L1335.0 411.9 L1335.5 412.0 L1336.0 409.7 L1336.5 409.7 L1337.0 411.5 L1337.5 410.1 L1338.0 403.9 M1344.0 406.6 L1344.5 407.8 L1345.0 408.4 L1345.5 405.9 L1346.0 404.4 L1346.5 406.0 L1347.0 410.1 L1347.5 405.7 L1348.0 408.0 L1348.5 406.3 L1349.0 406.5 M1368.0 405.4 L1368.5 403.7 L1369.0 403.1 L1369.5 407.7 L1370.0 404.4 L1370.5 407.8 L1371.0 405.4 L1371.5 408.5 L1372.0 404.0 L1372.5 403.5 L1373.0 403.4 L1373.5 407.1 L1374.0 405.7 L1374.5 403.6 L1375.0 401.7 M1388.0 406.2 L1388.5 405.9 L1389.0 406.4 L1389.5 404.3 L1390.0 406.7 L1390.5 402.5 L1391.0 402.7 L1391.5 401.2 L1392.0 404.9 L1392.5 402.6 L1393.0 400.9 L1393.5 400.0 L1394.0 403.6 L1394.5 402.6 L1395.0 403.2 L1395.5 400.7 L1396.0 401.2 L1396.5 398.7 L1397.0 402.4 L1397.5 397.4 L1398.0 400.3 M1409.0 397.8 L1409.5 392.3 L1410.0 397.0 L1410.5 391.3 L1411.0 393.8 L1411.5 392.0 L1412.0 396.1 L1412.5 394.5 L1413.0 394.6 L1413.5 395.3 L1414.0 396.0 L1414.5 392.2 L1415.0 393.9 L1415.5 392.7 L1416.0 390.2 L1416.5 395.2 L1417.0 393.4 L1417.5 394.8 L1418.0 390.4 L1418.5 392.7 L1419.0 392.0 L1419.5 393.8 L1420.0 389.1 L1420.5 390.9 L1421.0 391.7 L1421.5 388.7 L1422.0 392.0 L1422.5 393.1 L1423.0 390.8 L1423.5 392.3 L1424.0 391.9 L1424.5 389.1 L1425.0 389.9 L1425.5 394.3 L1426.0 389.6 L1426.5 390.1 L1427.0 387.6 M1427.0 384.0 L1427.5 383.1 L1428.0 380.9 L1428.5 384.1 L1429.0 380.7 L1429.5 381.9 L1430.0 381.2 L1430.5 384.9 L1431.0 381.9 L1431.5 380.6 L1432.0 378.8 L1432.5 381.3 L1433.0 382.4 L1433.5 382.5 L1434.0 383.9 L1434.5 382.9 L1435.0 378.7 L1435.5 377.7 L1436.0 381.8 L1436.5 381.8 L1437.0 379.6 L1437.5 381.6 L1438.0 379.4 L1438.5 377.2 L1439.0 376.2 L1439.5 374.9 L1440.0 379.0 L1440.5 380.5 L1441.0 380.3 L1441.5 377.0 L1442.0 378.2 L1442.5 379.8 L1443.0 378.7 M1456.0 367.9 L1456.5 369.2 L1457.0 365.1 L1457.5 365.9 L1458.0 370.3 L1458.5 364.1 L1459.0 368.8 L1459.5 363.1 L1460.0 368.2 L1460.5 365.4 L1461.0 364.6 L1461.5 360.5 L1462.0 359.3 L1462.5 363.6 L1463.0 359.0 L1463.5 358.5 L1464.0 362.3 L1464.5 362.1 L1465.0 355.7 L1465.5 361.5 L1466.0 357.9 L1466.5 356.3 L1467.0 353.7" stroke="#00c800" fill="none" stroke-width="1.3"/><path d="M1233.0 421.4 L1233.5 424.1 L1234.0 421.7 L1234.5 423.1 L1235.0 425.1 L1235.5 419.5 L1236.0 419.1 L1236.5 425.7 L1237.0 422.5 L1237.5 420.6 L1238.0 426.6 L1238.5 423.1 L1239.0 427.2 L1239.5 423.6 L1240.0 426.0 L1240.5 420.6 L1241.0 424.6 L1241.5 427.2 L1242.0 425.6 L1242.5 425.9 L1243.0 424.8 L1243.5 420.3 L1244.0 426.5 L1244.5 424.4 L1245.0 424.2 L1245.5 422.5 L1246.0 426.5 L1246.5 424.1 L1247.0 427.5 L1247.5 428.1 L1248.0 427.6 L1248.5 427.7 L1249.0 423.4 L1249.5 426.8 L1250.0 425.9 L1250.5 427.9 L1251.0 427.8 L1251.5 422.6 L1252.0 422.9 L1252.5 423.5 L1253.0 430.4 L1253.5 424.4 L1254.0 425.4 L1254.5 426.0 L1255.0 427.3 L1255.5 426.9 L1256.0 425.0 L1256.5 428.3 L1257.0 428.3 L1257.5 428.5 L1258.0 428.6 L1258.5 430.7 L1259.0 429.7 L1259.5 430.3 L1260.0 427.4 L1260.5 424.1 L1261.0 428.7 L1261.5 429.0 L1262.0 430.2 L1262.5 427.1 L1263.0 429.7 L1263.5 424.0 L1264.0 431.0 L1264.5 428.6 L1265.0 427.3 L1265.5 425.8 L1266.0 431.4 L1266.5 431.4 L1267.0 423.5 L1267.5 430.8 L1268.0 426.4 M1277.0 413.8 L1277.5 415.7 L1278.0 414.1 L1278.5 413.3 L1279.0 416.2 L1279.5 412.2 L1280.0 411.5 L1280.5 408.9 L1281.0 413.3 L1281.5 412.2 L1282.0 411.9 L1282.5 408.7 L1283.0 407.4 L1283.5 411.8 L1284.0 411.4 L1284.5 406.1 L1285.0 412.7 L1285.5 411.1 L1286.0 412.2 L1286.5 411.6 L1287.0 406.1 L1287.5 410.5 L1288.0 410.7 L1288.5 405.4 L1289.0 404.4 L1289.5 406.3 L1290.0 407.1 L1290.5 406.7 L1291.0 404.9 L1291.5 408.7 L1292.0 403.6 L1292.5 401.0 L1293.0 402.1 L1293.5 402.5 L1294.0 402.6 L1294.5 406.9 L1295.0 405.6 L1295.5 400.2 L1296.0 403.9 L1296.5 402.7 L1297.0 401.4 M1297.0 402.5 L1297.5 401.5 L1298.0 404.1 L1298.5 402.6 L1299.0 401.2 L1299.5 405.7 L1300.0 409.0 L1300.5 405.4 L1301.0 408.4 L1301.5 404.1 L1302.0 407.8 L1302.5 408.3 L1303.0 407.8 L1303.5 409.0 L1304.0 409.3 L1304.5 410.2 L1305.0 413.0 L1305.5 407.0 L1306.0 406.7 L1306.5 412.0 L1307.0 415.1 L1307.5 410.2 L1308.0 411.5 L1308.5 413.0 L1309.0 411.3 L1309.5 411.0 L1310.0 410.9 L1310.5 414.2 L1311.0 413.1 L1311.5 413.6 L1312.0 416.0 L1312.5 419.7 L1313.0 413.3 L1313.5 417.1 L1314.0 414.9 L1314.5 418.4 L1315.0 418.9 L1315.5 417.0 L1316.0 415.4 L1316.5 414.5 L1317.0 418.7 L1317.5 419.4 L1318.0 418.6 L1318.5 420.1 L1319.0 419.8 L1319.5 422.0 L1320.0 418.7 L1320.5 424.5 L1321.0 422.3 L1321.5 423.7 L1322.0 422.0 L1322.5 425.2 L1323.0 427.1 L1323.5 423.4 L1324.0 425.6 L1324.5 427.9 L1325.0 429.4 L1325.5 424.9 L1326.0 428.2 L1326.5 430.3 L1327.0 427.4 L1327.5 427.1 L1328.0 426.7 M1328.0 426.4 L1328.5 430.4 L1329.0 426.0 L1329.5 424.8 L1330.0 424.6 L1330.5 418.8 L1331.0 423.6 L1331.5 421.8 L1332.0 420.7 L1332.5 420.7 L1333.0 418.8 L1333.5 415.7 L1334.0 417.9 L1334.5 412.5 L1335.0 415.3 L1335.5 416.3 L1336.0 412.9 L1336.5 412.2 L1337.0 416.2 L1337.5 414.3 L1338.0 407.0 M1344.0 410.7 L1344.5 410.0 L1345.0 411.6 L1345.5 409.1 L1346.0 406.5 L1346.5 410.9 L1347.0 412.7 L1347.5 408.0 L1348.0 411.4 L1348.5 408.8 L1349.0 410.3 M1368.0 410.2 L1368.5 408.5 L1369.0 405.2 L1369.5 410.6 L1370.0 408.2 L1370.5 412.6 L1371.0 407.7 L1371.5 411.4 L1372.0 408.5 L1372.5 405.8 L1373.0 406.6 L1373.5 410.1 L1374.0 409.7 L1374.5 408.3 L1375.0 404.2 M1388.0 408.9 L1388.5 408.1 L1389.0 408.9 L1389.5 408.2 L1390.0 410.4 L1390.5 404.6 L1391.0 405.4 L1391.5 406.1 L1392.0 407.5 L1392.5 406.3 L1393.0 404.1 L1393.5 404.3 L1394.0 407.5 L1394.5 407.0 L1395.0 406.8 L1395.5 403.3 L1396.0 403.7 L1396.5 400.9 L1397.0 406.9 L1397.5 399.7 L1398.0 402.3 M1409.0 400.0 L1409.5 394.7 L1410.0 401.3 L1410.5 395.4 L1411.0 398.7 L1411.5 396.9 L1412.0 400.8 L1412.5 397.6 L1413.0 397.1 L1413.5 398.3 L1414.0 399.4 L1414.5 395.8 L1415.0 397.5 L1415.5 395.8 L1416.0 394.8 L1416.5 398.0 L1417.0 396.8 L1417.5 399.5 L1418.0 394.9 L1418.5 395.6 L1419.0 394.8 L1419.5 398.2 L1420.0 391.1 L1420.5 393.3 L1421.0 395.3 L1421.5 392.3 L1422.0 394.5 L1422.5 395.3 L1423.0 393.5 L1423.5 396.6 L1424.0 395.3 L1424.5 394.0 L1425.0 394.3 L1425.5 399.2 L1426.0 391.7 L1426.5 392.7 L1427.0 389.6 M1427.0 388.7 L1427.5 388.0 L1428.0 384.8 L1428.5 386.7 L1429.0 385.4 L1429.5 384.5 L1430.0 384.4 L1430.5 389.3 L1431.0 384.9 L1431.5 383.4 L1432.0 383.7 L1432.5 386.1 L1433.0 385.3 L1433.5 385.7 L1434.0 386.7 L1434.5 385.3 L1435.0 381.5 L1435.5 382.6 L1436.0 384.0 L1436.5 384.5 L1437.0 382.2 L1437.5 383.8 L1438.0 382.9 L1438.5 381.4 L1439.0 380.7 L1439.5 378.8 L1440.0 383.5 L1440.5 382.5 L1441.0 383.2 L1441.5 381.9 L1442.0 380.4 L1442.5 382.6 L1443.0 382.1 M1456.0 371.6 L1456.5 372.6 L1457.0 368.8 L1457.5 369.2 L1458.0 373.9 L1458.5 368.6 L1459.0 371.4 L1459.5 366.9 L1460.0 373.0 L1460.5 369.9 L1461.0 367.2 L1461.5 365.4 L1462.0 363.8 L1462.5 366.1 L1463.0 361.8 L1463.5 361.1 L1464.0 364.5 L1464.5 367.0 L1465.0 358.9 L1465.5 366.1 L1466.0 360.3 L1466.5 358.3 L1467.0 358.4" stroke="#ff0000" fill="none" stroke-width="1.3"/><path d="M1233.5 395.0 V551.3 M1245.5 425.0 V551.3 M1277.5 413.0 V551.3 M1295.5 405.0 V551.3 M1345.5 412.0 V551.3 M1356.5 410.0 V551.3 M1368.5 408.0 V551.3 M1370.0 408.0 V551.3 M1371.5 408.0 V551.3 M1373.0 410.0 V551.3 M1388.5 404.0 V551.3 M1397.5 395.0 V551.3 M1409.5 398.0 V551.3 M1430.5 388.0 V551.3 M1442.5 380.0 V551.3 M1456.5 372.0 V551.3 M1463.5 362.0 V551.3" stroke="#ff0000" stroke-width="1.5" fill="none"/><path d="M803.5 339.3 V553.3" stroke="#b4a800" stroke-width="3"/><path d="M797 551.5 H1469" stroke="#b4a800" stroke-width="3"/><path d="M797 382.5 H804 M797 425.5 H804 M797 467.5 H804 M797 509.5 H804" stroke="#b4a800" stroke-width="2"/><path d="M804.5 551.3 V557.3 M914.5 551.3 V557.3 M1025.5 551.3 V557.3 M1136.5 551.3 V557.3 M1246.5 551.3 V557.3 M1356.5 551.3 V557.3 M1467.5 551.3 V557.3" stroke="#b4a800" stroke-width="3"/><rect x="801" y="326.0" width="6" height="9" fill="#ff00ff"/><rect x="802.5" y="327.5" width="3" height="6" fill="#905090"/><rect x="790" y="337.5" width="11" height="6" fill="#ff00ff"/><rect x="792" y="339.0" width="7" height="3" fill="#905090"/><path d="M800 342.0 L807 336.0" stroke="#ff00ff" stroke-width="1.5"/><path d="M810 349.5 H814 V345.0" stroke="#404080" fill="none"/></svg>
<div class="a m" style="left:758.5px;top:328.3px;font-size:11px;letter-spacing:-0.6px;color:#b4a800">250.00</div>
<div class="a m" style="left:758.5px;top:370.5px;font-size:11px;letter-spacing:-0.6px;color:#b4a800">240.00</div>
<div class="a m" style="left:758.5px;top:412.7px;font-size:11px;letter-spacing:-0.6px;color:#b4a800">230.00</div>
<div class="a m" style="left:758.5px;top:454.9px;font-size:11px;letter-spacing:-0.6px;color:#b4a800">220.00</div>
<div class="a m" style="left:758.5px;top:497.1px;font-size:11px;letter-spacing:-0.6px;color:#b4a800">210.00</div>
<div class="a m" style="left:758.5px;top:539.3px;font-size:11px;letter-spacing:-0.6px;color:#b4a800">200.00</div>
<div class="a m" style="left:764.5px;top:560.0px;width:80px;text-align:center;font-size:11px;letter-spacing:-0.6px;color:#b4a800">18:14:04<br>2019-06-13</div>
<div class="a m" style="left:875.0px;top:560.0px;width:80px;text-align:center;font-size:11px;letter-spacing:-0.6px;color:#b4a800">22:14:04<br>2019-06-13</div>
<div class="a m" style="left:985.5px;top:560.0px;width:80px;text-align:center;font-size:11px;letter-spacing:-0.6px;color:#b4a800">02:14:04<br>2019-06-14</div>
<div class="a m" style="left:1096.0px;top:560.0px;width:80px;text-align:center;font-size:11px;letter-spacing:-0.6px;color:#b4a800">06:14:04<br>2019-06-14</div>
<div class="a m" style="left:1206.5px;top:560.0px;width:80px;text-align:center;font-size:11px;letter-spacing:-0.6px;color:#b4a800">10:14:04<br>2019-06-14</div>
<div class="a m" style="left:1317.0px;top:560.0px;width:80px;text-align:center;font-size:11px;letter-spacing:-0.6px;color:#b4a800">14:14:04<br>2019-06-14</div>
<div class="a m" style="left:1427.5px;top:560.0px;width:80px;text-align:center;font-size:11px;letter-spacing:-0.6px;color:#b4a800">18:14:04<br>2019-06-14</div>
<div class="a m" style="left:812px;top:319.5px;font-size:11px;letter-spacing:-0.6px;color:#ff00ff">2019-06-13 18:14:04</div>
<div class="a m" style="left:753.5px;top:348.0px;font-size:11px;letter-spacing:-0.6px;color:#ff00ff">250.00</div>
<div class="a" style="left:1097px;top:319.5px;font-size:18px;font-weight:bold;letter-spacing:1.8px;color:#800000">电压曲线</div>
<div class="a" style="left:1470px;top:334.0px;width:93px;height:230px;overflow:hidden"><div class="a" style="left:0;top:2.0px;font-size:12px;color:#b4a800"><span class="m" style="letter-spacing:-1px">A</span>相电压</div><div class="a m" style="left:6px;top:14.0px;font-size:11px;letter-spacing:-0.6px;color:#b4a800">Y[245.60]</div><div class="a m" style="left:6px;top:26.0px;font-size:11px;letter-spacing:-0.6px;color:#b4a800">YMax[245..]</div><div class="a" style="left:0;top:61.0px;font-size:12px;color:#00c000"><span class="m" style="letter-spacing:-1px">B</span>相电压</div><div class="a m" style="left:6px;top:73.0px;font-size:11px;letter-spacing:-0.6px;color:#00c000">Y[245.70]</div><div class="a m" style="left:6px;top:85.0px;font-size:11px;letter-spacing:-0.6px;color:#00c000">YMax[245..]</div><div class="a" style="left:0;top:122.0px;font-size:12px;color:#ff0000"><span class="m" style="letter-spacing:-1px">C</span>相电压</div><div class="a m" style="left:6px;top:134.0px;font-size:11px;letter-spacing:-0.6px;color:#ff0000">Y[244.60]</div><div class="a m" style="left:6px;top:146.0px;font-size:11px;letter-spacing:-0.6px;color:#ff0000">YMax[244..]</div><div class="a" style="left:1px;top:181px;width:90px;height:23px;border:1px solid #fff"></div><div class="a m" style="left:1px;top:189px;font-size:11px;letter-spacing:-0.6px;color:#000">All</div></div>
<svg class="a" style="left:0;top:0" width="1920" height="1080"><rect x="734.5" y="599.8" width="828.0" height="270.5" fill="none" stroke="#000"/><rect x="804" y="623.6" width="663" height="211.0" fill="#fff"/><path d="M828.5 623.6 V834.6 M851.5 623.6 V834.6 M875.5 623.6 V834.6 M922.5 623.6 V834.6 M946.5 623.6 V834.6 M970.5 623.6 V834.6 M1017.5 623.6 V834.6 M1041.5 623.6 V834.6 M1064.5 623.6 V834.6 M1112.5 623.6 V834.6 M1136.5 623.6 V834.6 M1159.5 623.6 V834.6 M1207.5 623.6 V834.6 M1230.5 623.6 V834.6 M1254.5 623.6 V834.6 M1301.5 623.6 V834.6 M1325.5 623.6 V834.6 M1349.5 623.6 V834.6 M1396.5 623.6 V834.6 M1420.5 623.6 V834.6 M1443.5 623.6 V834.6 M804 645.5 H1467 M804 687.5 H1467 M804 729.5 H1467 M804 771.5 H1467 M804 813.5 H1467" stroke="#a8a098" fill="none"/><path d="M899.5 623.6 V834.6 M993.5 623.6 V834.6 M1088.5 623.6 V834.6 M1183.5 623.6 V834.6 M1278.5 623.6 V834.6 M1372.5 623.6 V834.6 M804 666.5 H1467 M804 708.5 H1467 M804 750.5 H1467 M804 792.5 H1467 M1467.5 623.6 V834.6" stroke="#000" fill="none"/><path d="M804 624.5 H1468 M804.5 623.6 V834.6" stroke="#000" stroke-dasharray="3 2" fill="none"/><path d="M804 825.5 H1234" stroke="#00c000" stroke-width="1"/><path d="M1234.0 833 L1234.0 820.0 L1237.0 820.0 L1237.0 824.0 L1239.0 824.0 L1239.0 820.0 L1242.0 820.0 L1242.0 824.0 L1245.0 824.0 L1245.0 816.0 L1246.0 816.0 L1246.0 824.0 L1249.0 824.0 L1249.0 820.0 L1252.0 820.0 L1252.0 818.0 L1253.0 818.0 L1253.0 815.0 L1255.0 815.0 L1255.0 817.0 L1256.0 817.0 L1256.0 815.0 L1259.0 815.0 L1259.0 824.0 L1262.0 824.0 L1262.0 822.0 L1263.0 822.0 L1263.0 818.0 L1265.0 818.0 L1265.0 820.0 L1266.0 820.0 L1266.0 833 M1277.0 833 L1277.0 826.0 L1280.0 826.0 L1280.0 824.0 L1283.0 824.0 L1283.0 824.0 L1286.0 824.0 L1286.0 825.0 L1288.0 825.0 L1288.0 823.0 L1291.0 823.0 L1291.0 823.0 L1293.0 823.0 L1293.0 825.0 L1295.0 825.0 L1295.0 823.0 L1298.0 823.0 L1298.0 825.0 L1300.0 825.0 L1300.0 824.0 L1303.0 824.0 L1303.0 825.0 L1304.0 825.0 L1304.0 823.0 L1307.0 823.0 L1307.0 823.0 L1309.0 823.0 L1309.0 823.0 L1311.0 823.0 L1311.0 826.0 L1312.0 826.0 L1312.0 823.0 L1315.0 823.0 L1315.0 823.0 L1316.0 823.0 L1316.0 824.0 L1317.0 824.0 L1317.0 826.0 L1319.0 826.0 L1319.0 826.0 L1321.0 826.0 L1321.0 823.0 L1324.0 823.0 L1324.0 824.0 L1327.0 824.0 L1327.0 825.0 L1329.0 825.0 L1329.0 823.0 L1331.0 823.0 L1331.0 825.0 L1332.0 825.0 L1332.0 826.0 L1333.0 826.0 L1333.0 824.0 L1334.0 824.0 L1334.0 823.0 L1335.0 823.0 L1335.0 823.0 L1337.0 823.0 L1337.0 833 M1344.0 833 L1344.0 825.0 L1345.0 825.0 L1345.0 825.0 L1346.0 825.0 L1346.0 826.0 L1348.0 826.0 L1348.0 825.0 L1349.0 825.0 L1349.0 833 M1355.0 833 L1355.0 822.0 L1356.0 822.0 L1356.0 833 M1368.0 833 L1368.0 821.0 L1369.0 821.0 L1369.0 821.0 L1372.0 821.0 L1372.0 821.0 L1373.0 821.0 L1373.0 833 M1388.0 833 L1388.0 823.0 L1391.0 823.0 L1391.0 823.0 L1392.0 823.0 L1392.0 826.0 L1394.0 826.0 L1394.0 826.0 L1395.0 826.0 L1395.0 823.0 L1396.0 823.0 L1396.0 826.0 L1397.0 826.0 L1397.0 833 M1409.0 833 L1409.0 823.0 L1410.0 823.0 L1410.0 823.0 L1413.0 823.0 L1413.0 826.0 L1415.0 826.0 L1415.0 822.0 L1417.0 822.0 L1417.0 822.0 L1418.0 822.0 L1418.0 822.0 L1419.0 822.0 L1419.0 825.0 L1420.0 825.0 L1420.0 826.0 L1422.0 826.0 L1422.0 826.0 L1425.0 826.0 L1425.0 826.0 L1427.0 826.0 L1427.0 823.0 L1430.0 823.0 L1430.0 822.0 L1431.0 822.0 L1431.0 823.0 L1433.0 823.0 L1433.0 822.0 L1435.0 822.0 L1435.0 823.0 L1436.0 823.0 L1436.0 822.0 L1437.0 822.0 L1437.0 825.0 L1439.0 825.0 L1439.0 826.0 L1440.0 826.0 L1440.0 822.0 L1441.0 822.0 L1441.0 833 M1456.0 833 L1456.0 826.0 L1457.0 826.0 L1457.0 826.0 L1458.0 826.0 L1458.0 821.0 L1460.0 821.0 L1460.0 824.0 L1463.0 824.0 L1463.0 824.0 L1464.0 824.0 L1464.0 821.0 L1467.0 821.0 L1467.0 833" stroke="#00c000" fill="none" stroke-width="1.2"/><path d="M1236.0 833 L1236.0 829.5 L1243.0 829.5 L1243.0 829.5 L1247.0 829.5 L1247.0 832.5 L1250.0 832.5 L1250.0 832.5 L1253.0 832.5 L1253.0 832.5 L1256.0 832.5 L1256.0 832.5 L1260.0 832.5 L1260.0 832.5 L1263.0 832.5 L1263.0 832.5 L1266.0 832.5 M1279.0 833 L1279.0 832.5 L1283.0 832.5 L1283.0 829.5 L1290.0 829.5 L1290.0 832.5 L1296.0 832.5 L1296.0 832.5 L1300.0 832.5 L1300.0 829.5 L1304.0 829.5 L1304.0 832.5 L1310.0 832.5 L1310.0 832.5 L1316.0 832.5 L1316.0 832.5 L1320.0 832.5 L1320.0 832.5 L1325.0 832.5 L1325.0 832.5 L1330.0 832.5 L1330.0 832.5 L1334.0 832.5 L1334.0 832.5 L1337.0 832.5 M1346.0 833 L1346.0 832.5 L1349.0 832.5 M1357.0 833 M1370.0 833 L1370.0 832.5 L1373.0 832.5 M1390.0 833 L1390.0 832.5 L1394.0 832.5 L1394.0 832.5 L1397.0 832.5 M1411.0 833 L1411.0 832.5 L1416.0 832.5 L1416.0 832.5 L1423.0 832.5 L1423.0 832.5 L1427.0 832.5 L1427.0 832.5 L1432.0 832.5 L1432.0 832.5 L1438.0 832.5 L1438.0 832.5 L1441.0 832.5 M1458.0 833 L1458.0 829.5 L1461.0 829.5 L1461.0 832.5 L1464.0 832.5 L1464.0 829.5 L1467.0 829.5" stroke="#ff0000" fill="none" stroke-width="1.3"/><path d="M803.5 622.6 V836.6" stroke="#b4a800" stroke-width="3"/><path d="M797 835.5 H1469" stroke="#b4a800" stroke-width="3"/><path d="M797 666.5 H804 M797 708.5 H804 M797 750.5 H804 M797 792.5 H804" stroke="#b4a800" stroke-width="2"/><path d="M804.5 834.6 V840.6 M899.5 834.6 V840.6 M993.5 834.6 V840.6 M1088.5 834.6 V840.6 M1183.5 834.6 V840.6 M1278.5 834.6 V840.6 M1372.5 834.6 V840.6 M1467.5 834.6 V840.6" stroke="#b4a800" stroke-width="3"/><rect x="801" y="609.3" width="6" height="9" fill="#ff00ff"/><rect x="802.5" y="610.8" width="3" height="6" fill="#905090"/><rect x="790" y="620.8" width="11" height="6" fill="#ff00ff"/><rect x="792" y="622.3" width="7" height="3" fill="#905090"/><path d="M800 625.3 L807 619.3" stroke="#ff00ff" stroke-width="1.5"/><path d="M810 632.8 H814 V628.3" stroke="#404080" fill="none"/></svg>
<div class="a m" style="left:758.5px;top:611.6px;font-size:11px;letter-spacing:-0.6px;color:#b4a800">400.00</div>
<div class="a m" style="left:758.5px;top:653.8px;font-size:11px;letter-spacing:-0.6px;color:#b4a800">320.00</div>
<div class="a m" style="left:758.5px;top:696.0px;font-size:11px;letter-spacing:-0.6px;color:#b4a800">240.00</div>
<div class="a m" style="left:758.5px;top:738.2px;font-size:11px;letter-spacing:-0.6px;color:#b4a800">160.00</div>
<div class="a m" style="left:758.5px;top:780.4px;font-size:11px;letter-spacing:-0.6px;color:#b4a800">80.00</div>
<div class="a m" style="left:758.5px;top:822.6px;font-size:11px;letter-spacing:-0.6px;color:#b4a800">0.00</div>
<div class="a m" style="left:764.5px;top:843.3px;width:80px;text-align:center;font-size:11px;letter-spacing:-0.6px;color:#b4a800">18:14:04<br>2019-06-13</div>
<div class="a m" style="left:859.2px;top:843.3px;width:80px;text-align:center;font-size:11px;letter-spacing:-0.6px;color:#b4a800">21:39:46<br>2019-06-13</div>
<div class="a m" style="left:953.9px;top:843.3px;width:80px;text-align:center;font-size:11px;letter-spacing:-0.6px;color:#b4a800">01:05:29<br>2019-06-14</div>
<div class="a m" style="left:1048.6px;top:843.3px;width:80px;text-align:center;font-size:11px;letter-spacing:-0.6px;color:#b4a800">04:31:12<br>2019-06-14</div>
<div class="a m" style="left:1143.4px;top:843.3px;width:80px;text-align:center;font-size:11px;letter-spacing:-0.6px;color:#b4a800">07:56:55<br>2019-06-14</div>
<div class="a m" style="left:1238.1px;top:843.3px;width:80px;text-align:center;font-size:11px;letter-spacing:-0.6px;color:#b4a800">11:22:38<br>2019-06-14</div>
<div class="a m" style="left:1332.8px;top:843.3px;width:80px;text-align:center;font-size:11px;letter-spacing:-0.6px;color:#b4a800">14:48:21<br>2019-06-14</div>
<div class="a m" style="left:1427.5px;top:843.3px;width:80px;text-align:center;font-size:11px;letter-spacing:-0.6px;color:#b4a800">18:14:04<br>2019-06-14</div>
<div class="a m" style="left:812px;top:602.8px;font-size:11px;letter-spacing:-0.6px;color:#ff00ff">2019-06-13 18:14:04</div>
<div class="a m" style="left:753.5px;top:631.3px;font-size:11px;letter-spacing:-0.6px;color:#ff00ff">400.00</div>
<div class="a" style="left:1097px;top:602.8px;font-size:18px;font-weight:bold;letter-spacing:1.8px;color:#800000">电流曲线</div>
<div class="a" style="left:1470px;top:617.3px;width:93px;height:230px;overflow:hidden"><div class="a" style="left:0;top:2.0px;font-size:12px;color:#b4a800"><span class="m" style="letter-spacing:-1px">A</span>相电流</div><div class="a m" style="left:6px;top:14.0px;font-size:11px;letter-spacing:-0.6px;color:#b4a800">Y[0.80]</div><div class="a m" style="left:6px;top:26.0px;font-size:11px;letter-spacing:-0.6px;color:#b4a800">Y[1#配\1AA5\电源进线柜]</div><div class="a m" style="left:6px;top:38.0px;font-size:11px;letter-spacing:-0.6px;color:#b4a800">YMax[4.5..]</div><div class="a" style="left:0;top:62.0px;font-size:12px;color:#00c000"><span class="m" style="letter-spacing:-1px">B</span>相电流</div><div class="a m" style="left:6px;top:74.0px;font-size:11px;letter-spacing:-0.6px;color:#00c000">Y[13.10]</div><div class="a m" style="left:6px;top:86.0px;font-size:11px;letter-spacing:-0.6px;color:#00c000">Y[1#配\1AA5\电源进线柜]</div><div class="a m" style="left:6px;top:98.0px;font-size:11px;letter-spacing:-0.6px;color:#00c000">YMax[37...]</div><div class="a" style="left:0;top:122.0px;font-size:12px;color:#ff0000"><span class="m" style="letter-spacing:-1px">C</span>相电流</div><div class="a m" style="left:6px;top:134.0px;font-size:11px;letter-spacing:-0.6px;color:#ff0000">Y[4.90]</div><div class="a m" style="left:6px;top:146.0px;font-size:11px;letter-spacing:-0.6px;color:#ff0000">Y[1#配\1AA5\电源进线柜]</div><div class="a m" style="left:6px;top:158.0px;font-size:11px;letter-spacing:-0.6px;color:#ff0000">YMax[8.4..]</div><div class="a" style="left:1px;top:181px;width:90px;height:23px;border:1px solid #fff"></div><div class="a m" style="left:1px;top:189px;font-size:11px;letter-spacing:-0.6px;color:#000">All</div></div>
<svg class="a" style="left:0;top:0" width="1920" height="1080"><defs><linearGradient id="btng" x1="0" y1="0" x2="0" y2="1"><stop offset="0" stop-color="#6ab4f8"/><stop offset=".5" stop-color="#58a6f0"/><stop offset="1" stop-color="#4a98e8"/></linearGradient><linearGradient id="rdg" x1="0" y1="0" x2="1" y2="1"><stop offset="0" stop-color="#707070"/><stop offset=".6" stop-color="#c8c8c8"/><stop offset="1" stop-color="#f0f0f0"/></linearGradient></defs><rect x="733.5" y="884.5" width="829" height="63" rx="7" fill="none" stroke="#003800"/><path d="M734 917.5 H1562" stroke="#003800"/><rect x="812.5" y="889.5" width="220" height="22.5" fill="#fff" stroke="#a0a0a0"/><path d="M927.0 891.0 V910.5" stroke="#d8d8d8" stroke-width="2"/><rect x="900.5" y="895.5" width="10" height="10" rx="1" fill="#f0f0f0" stroke="#8a8a9a"/><path d="M901.5 898.5 h8 M901.5 901.5 h8 M901.5 903.5 h8" stroke="#b8b8c8"/><path d="M913.0 899.0 L919.0 899.0 L916.0 902.0 Z" fill="#3050a0"/><rect x="1014.5" y="891.5" width="15" height="18.5" fill="#f4f4f8" stroke="#b0b0c0"/><path d="M1015.0 900.5 H1029.0" stroke="#b0b0c0"/><path d="M1018.5 898.0 L1025.5 898.0 L1022.0 894.5 Z M1018.5 903.0 L1025.5 903.0 L1022.0 906.5 Z" fill="#4060b0"/><rect x="811.5" y="922.5" width="220" height="23.0" fill="#fff" stroke="#a0a0a0"/><path d="M926.0 924.0 V944.0" stroke="#d8d8d8" stroke-width="2"/><rect x="899.5" y="928.5" width="10" height="10" rx="1" fill="#f0f0f0" stroke="#8a8a9a"/><path d="M900.5 931.5 h8 M900.5 934.5 h8 M900.5 936.5 h8" stroke="#b8b8c8"/><path d="M912.0 932.0 L918.0 932.0 L915.0 935.0 Z" fill="#3050a0"/><rect x="1013.5" y="924.5" width="15" height="19.0" fill="#f4f4f8" stroke="#b0b0c0"/><path d="M1014.0 933.5 H1028.0" stroke="#b0b0c0"/><path d="M1017.5 931.0 L1024.5 931.0 L1021.0 927.5 Z M1017.5 936.0 L1024.5 936.0 L1021.0 939.5 Z" fill="#4060b0"/><rect x="1043.5" y="889.5" width="69.0" height="24.5" rx="2" fill="url(#btng)" stroke="#4a90d8"/><rect x="1123.5" y="889.5" width="69.0" height="24.5" rx="2" fill="url(#btng)" stroke="#4a90d8"/><rect x="1203.5" y="889.5" width="69.0" height="24.5" rx="2" fill="url(#btng)" stroke="#4a90d8"/><rect x="1284.5" y="889.5" width="69.0" height="24.5" rx="2" fill="url(#btng)" stroke="#4a90d8"/><rect x="1367.5" y="889.5" width="89.0" height="23.5" rx="2" fill="url(#btng)" stroke="#4a90d8"/><rect x="1468.5" y="887.5" width="89.0" height="24.5" rx="2" fill="url(#btng)" stroke="#4a90d8"/><circle cx="1119.5" cy="933" r="6" fill="#fff" stroke="url(#rdg)" stroke-width="1.5"/><circle cx="1191.5" cy="933" r="6" fill="#fff" stroke="url(#rdg)" stroke-width="1.5"/><circle cx="1263.5" cy="933" r="6" fill="#fff" stroke="url(#rdg)" stroke-width="1.5"/><circle cx="1263.5" cy="933" r="3" fill="#000"/><circle cx="1335.5" cy="933" r="6" fill="#fff" stroke="url(#rdg)" stroke-width="1.5"/><circle cx="1407.5" cy="933" r="6" fill="#fff" stroke="url(#rdg)" stroke-width="1.5"/><circle cx="1479.5" cy="933" r="6" fill="#fff" stroke="url(#rdg)" stroke-width="1.5"/></svg>
<div class="a" style="left:737.0px;top:891.0px;font-size:15px;color:#000;font-weight:bold">起始时间：</div>
<div class="a" style="left:737.0px;top:924.0px;font-size:15px;color:#000;font-weight:bold">结束时间：</div>
<div class="a" style="left:815.0px;top:893.0px;font-size:14px;color:#000;">2019/ 6/13</div>
<div class="a" style="left:930.0px;top:893.0px;font-size:14px;color:#000;">18:14:04</div>
<div class="a" style="left:815.0px;top:926.0px;font-size:14px;color:#000;">2019/ 6/14</div>
<div class="a" style="left:930.0px;top:926.0px;font-size:14px;color:#000;">18:14:04</div>
<div class="a" style="left:1043px;top:894.0px;width:70px;text-align:center;font-size:14px;color:#000">搜索曲线</div>
<div class="a" style="left:1123px;top:894.0px;width:70px;text-align:center;font-size:14px;color:#000">鼠标缩放</div>
<div class="a" style="left:1203px;top:894.0px;width:70px;text-align:center;font-size:14px;color:#000">鼠标平移</div>
<div class="a" style="left:1284px;top:894.0px;width:70px;text-align:center;font-size:14px;color:#000">刷新曲线</div>
<div class="a" style="left:1367px;top:894.0px;width:90px;text-align:center;font-size:14px;color:#000">打印电压曲线</div>
<div class="a" style="left:1468px;top:892.0px;width:90px;text-align:center;font-size:14px;color:#000">打印电流曲线</div>
<div class="a" style="left:1043.0px;top:925.0px;font-size:14px;color:#000;">量程选择：</div>
<div class="a" style="left:1130.5px;top:926.5px;font-size:14px;color:#000;">0. 25倍</div>
<div class="a" style="left:1202.5px;top:926.5px;font-size:14px;color:#000;">0. 5倍</div>
<div class="a" style="left:1274.0px;top:926.5px;font-size:14px;color:#000;">1倍</div>
<div class="a" style="left:1346.0px;top:926.5px;font-size:14px;color:#000;">2倍</div>
<div class="a" style="left:1418.0px;top:926.5px;font-size:14px;color:#000;">5倍</div>
<div class="a" style="left:1491.0px;top:926.5px;font-size:14px;color:#000;">自适应</div>
</body></html>
